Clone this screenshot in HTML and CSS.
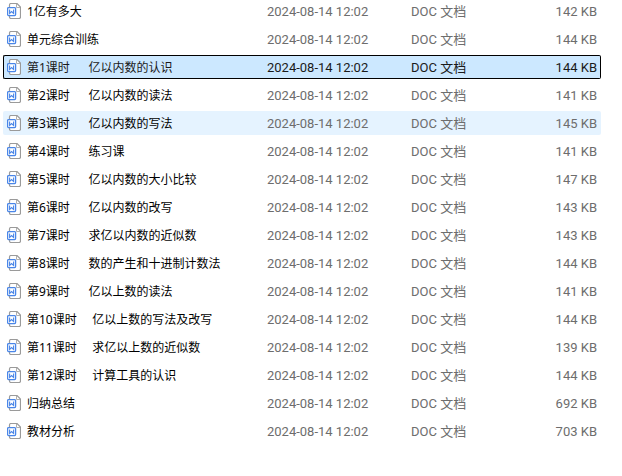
FILE: index.html
```html
<!DOCTYPE html>
<html lang="zh-CN">
<head>
    <meta charset="UTF-8">
    <meta name="viewport" content="width=device-width, initial-scale=1.0">
    <title>文件列表</title>
    <link rel="stylesheet" href="styles.css">
</head>
<body>
    <!-- 文档图标 -->
    <svg class="symbols" width="0" height="0">
        <symbol id="doc" viewBox="0 0 14 16">
            <path d="M2.5 5V2Q2.5 .5 4 .5H10L13.5 4V14Q13.5 15.5 12 15.5H4Q2.5 15.5 2.5 14V13" fill="#fff" stroke="#9a9a9a" stroke-width="1.2"/>
            <path d="M9.5 1V4.5H13" fill="none" stroke="#b0b0b0"/>
            <rect x=".6" y="4.6" width="8" height="8" rx="1" fill="#fff" stroke="#4a86e8" stroke-width="1.3"/>
            <path d="M2.6 6.6V10.4L4.6 8.6L6.6 10.4V6.6" fill="none" stroke="#4a86e8" stroke-width="1.1"/>
        </symbol>
    </svg>

    <div class="file-list">
        <table>
            <colgroup>
                <col>
                <col class="col-date">
                <col class="col-type">
                <col class="col-size">
            </colgroup>
            <tbody id="fileTableBody"></tbody>
        </table>
    </div>

    <script src="script.js"></script>
</body>
</html>
```
FILE: styles.css
```css
html, body {
    margin: 0;
    padding: 0;
    background-color: #fff;
    font-family: "Noto Sans", "Noto Sans CJK SC", sans-serif;
    font-size: 12px;
    color: #000;
}

.symbols {
    position: absolute;
}

.file-list {
    padding: 0 21px 0 3px;
    overflow: hidden;
}

/* 列表已滚动，第一行顶部被裁掉一点 */
table {
    width: 100%;
    margin-top: -5px;
    table-layout: fixed;
    border-collapse: separate;
    border-spacing: 0 4px;
}

.col-date {
    width: 144px;
}

.col-type {
    width: 120px;
}

.col-size {
    width: 74px;
}

td {
    box-sizing: border-box;
    height: 24px;
    padding: 1px 3px 0 4px;
    border: 1px solid transparent;
    border-width: 1px 0;
    line-height: 21px;
    white-space: pre;
    color: #6d6d6d;
    font-family: Roboto, "Noto Sans CJK SC", sans-serif;
    font-size: 13px;
}

td:first-child {
    border-left-width: 1px;
    border-radius: 2px 0 0 2px;
}

td:last-child {
    border-right-width: 1px;
    border-radius: 0 2px 2px 0;
}

td.name {
    padding: 0 3px;
    font-family: "Noto Sans", "Noto Sans CJK SC", sans-serif;
    font-size: 12px;
    color: #000;
}

.name-box {
    display: flex;
    align-items: center;
    gap: 6px;
    height: 22px;
}

.name-box span {
    padding-top: 1px;
}

.icon {
    width: 14px;
    height: 16px;
    flex: none;
}

.size {
    text-align: right;
}

.hover td {
    background-color: #e5f3ff;
}

.selected td {
    background-color: #cce8ff;
    border-color: #000;
    color: #1a1a1a;
}
```
FILE: script.js
```javascript
const files = [
    { name: "1亿有多大", size: 142 },
    { name: "单元综合训练", size: 144 },
    { name: "第1课时      亿以内数的认识", size: 144, state: "selected" },
    { name: "第2课时      亿以内数的读法", size: 141 },
    { name: "第3课时      亿以内数的写法", size: 145, state: "hover" },
    { name: "第4课时      练习课", size: 141 },
    { name: "第5课时      亿以内数的大小比较", size: 147 },
    { name: "第6课时      亿以内数的改写", size: 143 },
    { name: "第7课时      求亿以内数的近似数", size: 143 },
    { name: "第8课时      数的产生和十进制计数法", size: 144 },
    { name: "第9课时      亿以上数的读法", size: 141 },
    { name: "第10课时     亿以上数的写法及改写", size: 144 },
    { name: "第11课时     求亿以上数的近似数", size: 139 },
    { name: "第12课时     计算工具的认识", size: 144 },
    { name: "归纳总结", size: 692 },
    { name: "教材分析", size: 703 }
];

const fileTableBody = document.getElementById('fileTableBody');

files.forEach(file => {
    const row = document.createElement('tr');
    row.className = file.state || '';
    row.innerHTML = `
        <td class="name"><div class="name-box"><svg class="icon" aria-hidden="true"><use href="#doc"/></svg><span>${file.name}</span></div></td>
        <td class="date">2024-08-14 12:02</td>
        <td class="type">DOC 文档</td>
        <td class="size">${file.size} KB</td>
    `;
    fileTableBody.appendChild(row);
});
```
